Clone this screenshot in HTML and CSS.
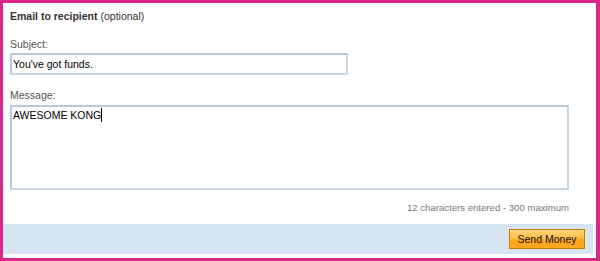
FILE: index.html
```html
<!DOCTYPE html>
<html lang="en">
<head>
    <meta charset="UTF-8">
    <title>Email to recipient</title>
    <link rel="stylesheet" href="styles.css">
</head>
<body>
    <div class="frame">
        <div class="panel">
            <h3 class="title">Email to recipient <span class="opt">(optional)</span></h3>
            <label class="field-label" for="subject">Subject:</label>
            <input type="text" id="subject" class="subject" value="You've got funds.">
            <label class="field-label" for="message">Message:</label>
            <div class="message" id="message">AWESOME KONG<span class="caret"></span></div>
            <div class="counter">12 characters entered - 300 maximum</div>
        </div>
        <div class="actions">
            <button class="send">Send Money</button>
        </div>
    </div>
</body>
</html>
```

FILE: styles.css
```css
html, body {
    margin: 0;
    padding: 0;
}
body {
    font-family: "Liberation Sans", Arial, sans-serif;
    font-size: 10.5px;
    color: #333;
    background: #fff;
}
.frame {
    width: 600px;
    height: 261px;
    box-sizing: border-box;
    border: 3px solid #d9288a;
    border-right-width: 4px;
    background: #fff;
    padding-bottom: 4px;
    display: flex;
    flex-direction: column;
}
.panel {
    padding: 6px 0 0 7px;
    flex: 1;
}
.title {
    margin: 0;
    font-size: 10.5px;
    font-weight: bold;
    color: #333;
    line-height: 14px;
}
.title .opt {
    font-weight: normal;
}
.field-label {
    display: block;
    margin-top: 14px;
    color: #555;
    line-height: 14px;
}
.subject {
    display: block;
    box-sizing: border-box;
    width: 338px;
    height: 22px;
    margin: 2px 0 0 0;
    padding: 0 1px;
    font-family: inherit;
    font-size: 10.5px;
    color: #000;
    border: 2px solid #c9d6e6;
    border-top-color: #b9c8db;
    border-left-color: #b9c8db;
    outline: none;
}
.subject + .field-label {
    margin-top: 13px;
}
.message {
    box-sizing: border-box;
    width: 559px;
    height: 85px;
    margin-top: 3px;
    padding: 1px 1px;
    color: #000;
    border: 2px solid #c9d6e6;
    border-top-color: #b9c8db;
    border-left-color: #b9c8db;
    line-height: 14px;
}
.caret {
    display: inline-block;
    width: 1px;
    height: 14px;
    background: #000;
    vertical-align: top;
}
.counter {
    width: 559px;
    text-align: right;
    margin-top: 12px;
    font-size: 9.6px;
    line-height: 12px;
    color: #777;
}
.actions {
    height: 30px;
    margin-right: 3px;
    background: #d6e5f1;
    display: flex;
    align-items: center;
    justify-content: flex-end;
    padding-right: 8px;
}
.send {
    width: 76px;
    height: 20px;
    padding: 0;
    font-family: inherit;
    font-size: 10.5px;
    color: #111;
    border: 1px solid #c97a00;
    background: linear-gradient(#ffd57a 0%, #ffc04a 45%, #ffa51e 55%, #ffa820 100%);
    cursor: pointer;
}
```
